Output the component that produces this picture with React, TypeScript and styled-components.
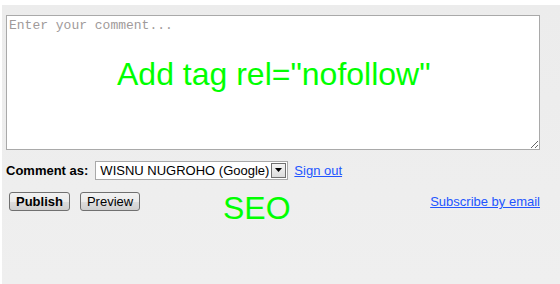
import styled, { createGlobalStyle } from "styled-components";

const GlobalStyle = createGlobalStyle`
  html, body {
    margin: 0;
    padding: 0;
    background: #ffffff;
  }
  body {
    font-family: "Liberation Sans", Arial, sans-serif;
    font-size: 13px;
  }
`;

export default function App() {
  return (
    <>
      <GlobalStyle />
      <Page>
        <Panel>
          <CommentBox placeholder="Enter your comment..." />
          <IdentityRow>
            <Label>Comment as:</Label>
            <Select>
              <SelectValue>WISNU NUGROHO (Google)</SelectValue>
              <SelectArrow>
                <svg width="7" height="4" viewBox="0 0 7 4">
                  <path d="M0 0h7L3.5 4z" fill="#000" />
                </svg>
              </SelectArrow>
            </Select>
            <TextLink href="#">Sign out</TextLink>
          </IdentityRow>
          <ActionRow>
            <Button bold>Publish</Button>
            <Button>Preview</Button>
            <Spacer />
            <TextLink href="#">Subscribe by email</TextLink>
          </ActionRow>
          <Note top={51} left={115}>
            Add tag rel="nofollow"
          </Note>
          <Note top={185} left={221}>
            SEO
          </Note>
        </Panel>
      </Page>
    </>
  );
}

const Page = styled.div`
  width: 560px;
  height: 284px;
  padding: 5px 0 0 2px;
  box-sizing: border-box;
`;

const Panel = styled.div`
  position: relative;
  height: 279px;
  background: linear-gradient(#ececec, #efefef);
  padding: 10px 0 0 4px;
  box-sizing: border-box;
`;

const CommentBox = styled.textarea`
  display: block;
  width: 534px;
  height: 135px;
  box-sizing: border-box;
  margin: 0;
  padding: 2px 2px;
  border: 1px solid #a9a9a9;
  background: #ffffff;
  font-family: "Liberation Mono", "Courier New", monospace;
  font-size: 13px;
  line-height: 16px;
  outline: none;
  resize: both;

  &::placeholder {
    color: #a09a9a;
  }
`;

const IdentityRow = styled.div`
  display: flex;
  align-items: center;
  margin-top: 10px;
  height: 20px;
`;

const Label = styled.span`
  font-weight: bold;
  color: #000;
  margin-right: 7px;
`;

const Select = styled.div`
  display: flex;
  align-items: center;
  width: 193px;
  height: 19px;
  box-sizing: border-box;
  border: 1px solid #a9a9a9;
  background: #fff;
  padding: 1px;
  margin-right: 6px;
`;

const SelectValue = styled.span`
  flex: 1;
  padding-left: 3px;
  color: #000;
  white-space: nowrap;
`;

const SelectArrow = styled.span`
  display: flex;
  align-items: center;
  justify-content: center;
  width: 15px;
  height: 15px;
  box-sizing: border-box;
  border: 1px solid #707070;
  background: linear-gradient(#f4f4f4, #dcdcdc);
`;

const TextLink = styled.a`
  color: #2255ff;
  text-decoration: underline;
`;

const ActionRow = styled.div`
  display: flex;
  align-items: center;
  margin-top: 12px;
  padding-left: 3px;
  gap: 10px;
  width: 534px;
  box-sizing: border-box;
`;

const Spacer = styled.div`
  flex: 1;
`;

const Button = styled.button<{ bold?: boolean }>`
  height: 19px;
  padding: 0 6px;
  font-family: "Liberation Sans", Arial, sans-serif;
  font-size: 13px;
  font-weight: ${({ bold }) => (bold ? "bold" : "normal")};
  color: #000;
  border: 1px solid #707070;
  border-radius: 3px;
  background: linear-gradient(#f2f2f2 0%, #ebebeb 50%, #dddddd 51%, #cfcfcf 100%);
  line-height: 15px;
`;

const Note = styled.div<{ top: number; left: number }>`
  position: absolute;
  top: ${({ top }) => top}px;
  left: ${({ left }) => left}px;
  font-family: "Liberation Sans", Arial, sans-serif;
  font-size: 32px;
  line-height: 36px;
  color: #00ff00;
  white-space: nowrap;
`;
